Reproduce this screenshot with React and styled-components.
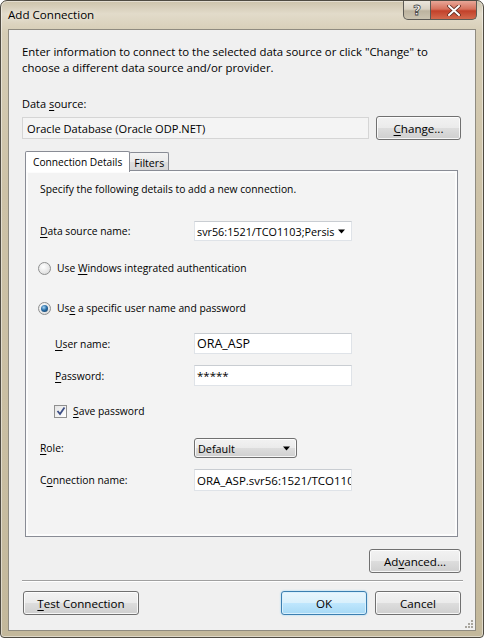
import React from 'react';
import styled, { createGlobalStyle, css } from 'styled-components';

const GlobalStyle = createGlobalStyle`
	html, body {
		margin: 0;
		padding: 0;
		background: #ffffff;
	}
	* {
		box-sizing: border-box;
	}
`;

const font = css`
	font-family: 'Open Sans', 'Noto Sans', sans-serif;
	font-size: 11px;
	color: #000;
`;

const Window = styled.div`
	width: 484px;
	height: 638px;
	border: 1px solid #4f4b42;
	border-radius: 7px 7px 4px 4px;
	background: linear-gradient(
		to bottom,
		#cdc3ab 0%,
		#e2dbca 2%,
		#d6cdb5 5%,
		#cdc2a7 30%,
		#c9bea2 70%,
		#c3b89b 100%
	);
	box-shadow: inset 0 0 0 1px rgba(255, 255, 255, 0.45);
	padding: 0 7px 6px 7px;
	display: flex;
	flex-direction: column;
	${font};
`;

const TitleBar = styled.div`
	height: 28px;
	display: flex;
	justify-content: space-between;
	align-items: flex-start;
`;

const Title = styled.div`
	margin-top: 6px;
	font-size: 11.6px;
	text-shadow: 0 0 6px rgba(255, 255, 255, 0.9);
`;

const Caption = styled.div`
	display: flex;
	margin-right: -1px;
`;

const CapButton = styled.div`
	height: 19px;
	width: ${p => p.$w}px;
	border: 1px solid #5c5a55;
	border-top: none;
	display: flex;
	align-items: center;
	justify-content: center;
	${p =>
		p.$close
			? css`
					border-left: none;
					border-radius: 0 0 5px 0;
					background: linear-gradient(to bottom, #e8a798 0%, #d6715c 45%, #c2412a 55%, #d36a4e 100%);
			  `
			: css`
					border-radius: 0 0 0 5px;
					background: linear-gradient(to bottom, #ebe6dc 0%, #d8d1c2 45%, #bcb39f 55%, #cbc3b0 100%);
			  `}
`;

const HelpGlyph = styled.span`
	font-family: 'DejaVu Sans', sans-serif;
	font-weight: bold;
	font-size: 14px;
	color: #fff;
	-webkit-text-stroke: 0.8px #4a4a4a;
	line-height: 1;
`;

const Client = styled.div`
	flex: 1;
	position: relative;
	background: #f0f0f0;
	border: 1px solid #8f8b80;
	padding: 14px 14px 0 13px;
	display: flex;
	flex-direction: column;
`;

const Intro = styled.p`
	margin: 0;
	line-height: 16px;
	font-size: 11.4px;
`;

const Label = styled.div`
	line-height: 16px;
	font-size: ${p => p.$fs || 11}px;
	margin-top: ${p => p.$mt || 0}px;
`;

const Key = styled.span`
	text-decoration: underline;
	text-underline-offset: 2px;
`;

const SourceRow = styled.div`
	display: flex;
	align-items: center;
	justify-content: space-between;
	margin-top: 4px;
`;

const ReadOnlyBox = styled.div`
	width: 347px;
	height: 22px;
	border: 1px solid #d5d5d5;
	background: #f4f4f4;
	padding-left: 4px;
	display: flex;
	align-items: center;
	font-size: 11.1px;
`;

const Button = styled.div`
	width: ${p => p.$w}px;
	height: 24px;
	border: 1px solid #707070;
	border-radius: 3px;
	display: flex;
	align-items: center;
	justify-content: center;
	font-size: 11.6px;
	box-shadow: inset 0 0 0 1px rgba(255, 255, 255, 0.8);
	background: linear-gradient(to bottom, #f2f2f2 0%, #ebebeb 48%, #dddddd 52%, #cfcfcf 100%);
	margin-left: ${p => p.$ml || 0}px;
	${p =>
		p.$default &&
		css`
			border-color: #3c7fb1;
			box-shadow: inset 0 0 0 1px #d8f0fd, 0 0 2px #8fd0f5;
			background: linear-gradient(to bottom, #eaf6fd 0%, #d9f0fc 48%, #bee6fd 52%, #a7d9f5 100%);
		`}
`;

const Tabs = styled.div`
	margin: 11px 3px 0 3px;
	display: flex;
	flex-direction: column;
`;

const TabStrip = styled.div`
	display: flex;
	align-items: flex-end;
	height: 21px;
	position: relative;
	z-index: 1;
	margin-bottom: -2px;
`;

const Tab = styled.div`
	height: ${p => (p.$active ? 21 : 18)}px;
	padding: 0 ${p => (p.$active ? 7 : 4)}px;
	border: 1px solid #898c95;
	border-bottom: none;
	border-radius: 2px 2px 0 0;
	display: flex;
	align-items: center;
	font-size: 10.2px;
	${p =>
		p.$active
			? css`
					background: #fff;
			  `
			: css`
					margin-left: -1px;
					margin-bottom: 2px;
					padding-top: 2px;
					font-size: 10.6px;
					background: linear-gradient(to bottom, #f3f3f3 0%, #ebebeb 50%, #dedede 51%, #d7d7d7 100%);
			  `}
`;

const Panel = styled.div`
	height: 367px;
	border: 1px solid #898c95;
	background: #f3f3f3;
	box-shadow: inset 0 0 0 2px #fcfcfc;
	padding: 9px 14px 0 14px;
	display: flex;
	flex-direction: column;
	font-size: 10.3px;
`;

const Row = styled.div`
	display: flex;
	align-items: center;
	margin-top: ${p => p.$mt || 0}px;
	padding-left: ${p => p.$indent || 0}px;
`;

const FieldLabel = styled.div`
	width: ${p => 154 - (p.$indent || 0)}px;
	flex-shrink: 0;
	font-size: 10.3px;
`;

const TextBox = styled.div`
	width: ${p => p.$w || 158}px;
	height: ${p => p.$h || 21}px;
	background: #fff;
	border: 1px solid #dfe3e8;
	border-top-color: #c9cdd2;
	padding-left: 2px;
	display: flex;
	align-items: center;
	justify-content: space-between;
	overflow: hidden;
	white-space: nowrap;
	font-size: ${p => p.$fs || 11.5}px;
`;

const ComboArrow = styled.svg`
	flex-shrink: 0;
	margin-right: 5px;
`;

const DropButton = styled.div`
	width: 103px;
	height: 20px;
	border: 1px solid #707070;
	border-radius: 3px;
	box-shadow: inset 0 0 0 1px rgba(255, 255, 255, 0.8);
	background: linear-gradient(to bottom, #f2f2f2 0%, #ebebeb 48%, #dddddd 52%, #cfcfcf 100%);
	display: flex;
	align-items: center;
	justify-content: space-between;
	padding-left: 3px;
	font-size: 10.8px;
`;

const Choice = styled.div`
	display: flex;
	align-items: center;
	height: 16px;
	gap: ${p => p.$gap || 6}px;
	font-size: 10.3px;
	margin-top: ${p => p.$mt || 0}px;
	margin-left: ${p => p.$indent || 0}px;
`;

const Radio = styled.span`
	width: 13px;
	height: 13px;
	border-radius: 50%;
	border: 1px solid #8e8f8f;
	background: radial-gradient(circle at 40% 35%, #ffffff 0%, #e6e6e6 60%, #cfcfcf 100%);
	display: flex;
	align-items: center;
	justify-content: center;
	&::after {
		content: '';
		width: 7px;
		height: 7px;
		border-radius: 50%;
		display: ${p => (p.$on ? 'block' : 'none')};
		background: radial-gradient(circle at 40% 35%, #a9d6f5 0%, #2a6fa8 45%, #0d2f52 100%);
	}
`;

const Check = styled.span`
	width: 13px;
	height: 13px;
	border: 1px solid #8f8f8f;
	background: linear-gradient(135deg, #e4e4e4 0%, #ffffff 100%);
	display: flex;
	align-items: center;
	justify-content: center;
`;

const Footer = styled.div`
	display: flex;
	justify-content: ${p => (p.$between ? 'space-between' : 'flex-end')};
	align-items: center;
	margin-top: ${p => p.$mt}px;
`;

const Separator = styled.div`
	height: 2px;
	margin: 7px -2px 0 0;
	border-top: 1px solid #a0a0a0;
	border-bottom: 1px solid #ffffff;
`;

const Group = styled.div`
	display: flex;
	align-items: center;
`;

const Grip = styled.svg`
	position: absolute;
	right: 1px;
	bottom: 1px;
`;

const Arrow = () => (
	<ComboArrow width="9" height="5" viewBox="0 0 9 5">
		<polygon points="1,0.5 8,0.5 4.5,4.5" fill="#000" />
	</ComboArrow>
);

export default function App() {
	return (
		<>
			<GlobalStyle />
			<Window>
				<TitleBar>
					<Title>Add Connection</Title>
					<Caption>
						<CapButton $w={28}>
							<HelpGlyph>?</HelpGlyph>
						</CapButton>
						<CapButton $w={46} $close>
							<svg width="14" height="11" viewBox="0 0 14 11">
								<path d="M2 1 L12 10 M12 1 L2 10" stroke="#5a2a20" strokeWidth="3.6" strokeLinecap="round" />
								<path d="M2 1 L12 10 M12 1 L2 10" stroke="#ffffff" strokeWidth="2" strokeLinecap="round" />
							</svg>
						</CapButton>
					</Caption>
				</TitleBar>
				<Client>
					<Intro>
						Enter information to connect to the selected data source or click "Change" to
						<br />
						choose a different data source and/or provider.
					</Intro>
					<Label $mt={20}>
						Data <Key>s</Key>ource:
					</Label>
					<SourceRow>
						<ReadOnlyBox>Oracle Database (Oracle ODP.NET)</ReadOnlyBox>
						<Button $w={85}>
							<span>
								<Key>C</Key>hange...
							</span>
						</Button>
					</SourceRow>

					<Tabs>
						<TabStrip>
							<Tab $active>Connection Details</Tab>
							<Tab>Filters</Tab>
						</TabStrip>
						<Panel>
							<Label $mt={1} $fs={10.3}>
								Specify the following details to add a new connection.
							</Label>

							<Row $mt={24}>
								<FieldLabel>
									<Key>D</Key>ata source name:
								</FieldLabel>
								<TextBox $h={20} $fs={10.8}>
									<span>svr56:1521/TCO1103;Persis</span>
									<Arrow />
								</TextBox>
							</Row>

							<Choice $mt={19} $indent={-2}>
								<Radio />
								<span>
									Use <Key>W</Key>indows integrated authentication
								</span>
							</Choice>
							<Choice $mt={24} $indent={-2}>
								<Radio $on />
								<span>
									Us<Key>e</Key> a specific user name and password
								</span>
							</Choice>

							<Row $mt={17} $indent={15}>
								<FieldLabel $indent={15}>
									<Key>U</Key>ser name:
								</FieldLabel>
								<TextBox $fs={12.5}>ORA_ASP</TextBox>
							</Row>
							<Row $mt={11} $indent={15}>
								<FieldLabel $indent={15}>
									<Key>P</Key>assword:
								</FieldLabel>
								<TextBox>*****</TextBox>
							</Row>

							<Choice $mt={17} $indent={14}>
								<Check>
									<svg width="10" height="10" viewBox="0 0 10 10">
										<path d="M1.5 5 L4 8 L8.5 1.5" fill="none" stroke="#3d4f86" strokeWidth="1.8" />
									</svg>
								</Check>
								<span>
									<Key>S</Key>ave password
								</span>
							</Choice>

							<Row $mt={19}>
								<FieldLabel>
									<Key>R</Key>ole:
								</FieldLabel>
								<DropButton>
									<span>Default</span>
									<Arrow />
								</DropButton>
							</Row>
							<Row $mt={11}>
								<FieldLabel>
									C<Key>o</Key>nnection name:
								</FieldLabel>
								<TextBox $h={22} $fs={11.5}>
									ORA_ASP.svr56:1521/TCO1103
								</TextBox>
							</Row>
						</Panel>
					</Tabs>

					<Footer $mt={12}>
						<Button $w={92}>
							<span>
								Ad<Key>v</Key>anced...
							</span>
						</Button>
					</Footer>
					<Separator />
					<Footer $mt={9} $between>
						<Button $w={116} $ml={1}>
							<span>
								<Key>T</Key>est Connection
							</span>
						</Button>
						<Group>
							<Button $w={86} $default>
								OK
							</Button>
							<Button $w={86} $ml={8}>
								Cancel
							</Button>
						</Group>
					</Footer>
					<Grip width="10" height="10" viewBox="0 0 10 10">
						<g fill="#a9a69e">
							<rect x="7" y="1" width="2" height="2" />
							<rect x="4" y="4" width="2" height="2" />
							<rect x="7" y="4" width="2" height="2" />
							<rect x="1" y="7" width="2" height="2" />
							<rect x="4" y="7" width="2" height="2" />
							<rect x="7" y="7" width="2" height="2" />
						</g>
					</Grip>
				</Client>
			</Window>
		</>
	);
}
